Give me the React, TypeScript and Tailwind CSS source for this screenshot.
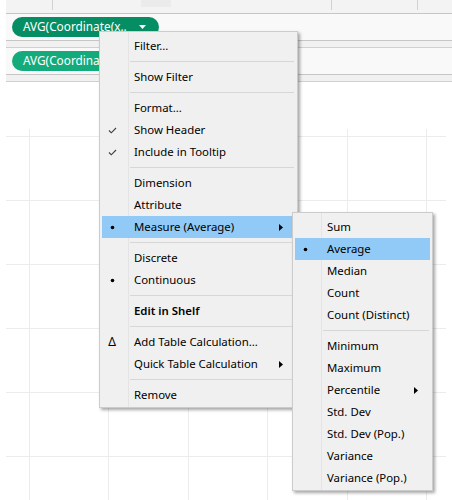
import React from "react";

type Mark = "check" | "dot" | "delta";
type Entry =
  | { sep: true }
  | { label: string; mark?: Mark; sub?: boolean; active?: boolean; bold?: boolean };

const MAIN: Entry[] = [
  { label: "Filter..." },
  { sep: true },
  { label: "Show Filter" },
  { sep: true },
  { label: "Format..." },
  { label: "Show Header", mark: "check" },
  { label: "Include in Tooltip", mark: "check" },
  { sep: true },
  { label: "Dimension" },
  { label: "Attribute" },
  { label: "Measure (Average)", mark: "dot", sub: true, active: true },
  { sep: true },
  { label: "Discrete" },
  { label: "Continuous", mark: "dot" },
  { sep: true },
  { label: "Edit in Shelf", bold: true },
  { sep: true },
  { label: "Add Table Calculation...", mark: "delta" },
  { label: "Quick Table Calculation", sub: true },
  { sep: true },
  { label: "Remove" },
];

const AGGREGATES: Entry[] = [
  { label: "Sum" },
  { label: "Average", mark: "dot", active: true },
  { label: "Median" },
  { label: "Count" },
  { label: "Count (Distinct)" },
  { sep: true },
  { label: "Minimum" },
  { label: "Maximum" },
  { label: "Percentile", sub: true },
  { label: "Std. Dev" },
  { label: "Std. Dev (Pop.)" },
  { label: "Variance" },
  { label: "Variance (Pop.)" },
];

const COLS = 7;
const ROWS = 7;

function Glyph({ mark }: { mark?: Mark }) {
  if (mark === "check")
    return (
      <svg width="9" height="7" viewBox="0 0 9 7" fill="none">
        <path d="M1 3.5L3.3 5.8L8 1" stroke="#3c3c3c" strokeWidth="1.1" />
      </svg>
    );
  if (mark === "dot")
    return (
      <svg width="5" height="5" viewBox="0 0 5 5">
        <circle cx="2.5" cy="2.5" r="1.8" fill="#000" />
      </svg>
    );
  if (mark === "delta") return <span className="text-[12px] leading-none">Δ</span>;
  return null;
}

function Menu({ items, className }: { items: Entry[]; className: string }) {
  return (
    <div
      className={`absolute border border-[#cccccc] bg-[#f0f0f0] px-[2px] pt-[3px] pb-[1px] text-[11.4px] shadow-[2px_2px_3px_rgba(0,0,0,0.35)] ${className}`}
    >
      <div className="absolute top-0 bottom-0 left-[28px] w-px bg-[#e4e4e4]" />
      {items.map((it, i) =>
        "sep" in it ? (
          <div key={i} className="relative flex h-[9px] items-center pl-[28px] pr-[1px]">
            <div className="h-px w-full bg-[#d7d7d7]" />
          </div>
        ) : (
          <div
            key={i}
            className={
              it.active
                ? "relative flex h-[22px] items-center bg-[#91c9f7]"
                : "relative flex h-[22px] items-center"
            }
          >
            <span className="flex w-[20px] shrink-0 justify-center">
              <Glyph mark={it.mark} />
            </span>
            <span
              className={
                it.bold
                  ? "ml-[12px] flex-1 whitespace-nowrap font-semibold"
                  : "ml-[12px] flex-1 whitespace-nowrap"
              }
            >
              {it.label}
            </span>
            {it.sub && (
              <svg className="mr-[12px]" width="4" height="7" viewBox="0 0 4 7">
                <path d="M0 0L4 3.5L0 7Z" fill="#000" />
              </svg>
            )}
          </div>
        ),
      )}
    </div>
  );
}

function Pill({ text, tone }: { text: string; tone: string }) {
  return (
    <div
      className={`flex h-[20px] w-[147px] shrink-0 items-center rounded-full pl-[11px] pr-[13px] text-[11.8px] text-white ${tone}`}
    >
      <span className="flex-1 whitespace-nowrap">{text}</span>
      <svg width="7" height="4" viewBox="0 0 7 4">
        <path d="M0 0H7L3.5 4Z" fill="#fff" />
      </svg>
    </div>
  );
}

export default function App() {
  return (
    <div className="relative h-[500px] w-[452px] overflow-hidden bg-white font-['Noto_Sans',sans-serif] text-[12px] text-black">
      <div className="ml-[6px]">
        <div className="flex h-[14px] items-start border-b border-[#c6c6c6] bg-[#f3f3f3]">
          <div className="h-[10px] w-[47px] border-r border-[#d2d2d2]" />
          <div className="ml-[88px] h-[7px] w-[30px] bg-[#ebebeb]" />
          <div className="h-[10px] w-[161px] border-r border-[#d2d2d2]" />
          <div className="h-[10px] w-[86px] border-r border-[#d2d2d2]" />
        </div>
        <div className="flex h-[27px] items-center border-b border-[#c6c6c6] bg-[#f9f9f9] pl-[6px]">
          <Pill text="AVG(Coordinate(x.." tone="bg-[#058e64]" />
        </div>
        <div className="h-[7px] border-b border-[#d0d0d0] bg-[#f1f1f1]" />
        <div className="flex h-[27px] items-center border-b border-[#c6c6c6] bg-[#f9f9f9] pl-[6px]">
          <Pill text="AVG(Coordinate(y.." tone="bg-[#14ab7c]" />
        </div>
        <div className="h-[7px] border-b border-[#d0d0d0] bg-[#f1f1f1]" />

        <div className="mt-[47px] grid grid-cols-[23px_79px_80px_79px_80px_79px_20px] grid-rows-[7px_repeat(6,64px)]">
          {Array.from({ length: ROWS * COLS }).map((_, i) => {
            const r = Math.floor(i / COLS);
            const c = i % COLS;
            return (
              <div
                key={i}
                className={`${c > 0 ? "border-l" : ""} ${r > 0 ? "border-t" : ""} border-[#ececec]`}
              />
            );
          })}
        </div>
      </div>

      <Menu items={MAIN} className="left-[99px] top-[31px] w-[199px]" />
      <Menu items={AGGREGATES} className="left-[292px] top-[212px] w-[141px]" />
    </div>
  );
}
